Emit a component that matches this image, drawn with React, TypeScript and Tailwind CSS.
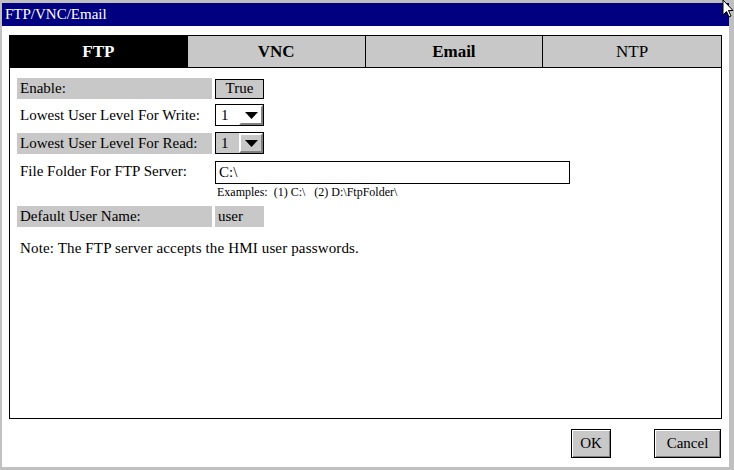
import React from 'react';

const serif = { fontFamily: '"Liberation Serif", "Times New Roman", serif' };

const tabs = [
  { name: 'FTP', active: true, bold: true },
  { name: 'VNC', active: false, bold: true },
  { name: 'Email', active: false, bold: true },
  { name: 'NTP', active: false, bold: false },
];

const Label = ({ text, shaded }: { text: string; shaded?: boolean }) => (
  <div className={`w-[195px] h-[21px] flex items-center pl-[3px] ${shaded ? 'bg-[#c8c8c8]' : ''}`}>
    {text}
  </div>
);

const Select = ({ value, shaded }: { value: string; shaded?: boolean }) => (
  <div className={`w-[49px] h-[22px] flex border border-black ${shaded ? 'bg-[#c8c8c8]' : 'bg-white'}`}>
    <div className="w-[23px] flex items-center pl-[5px]">{value}</div>
    <div className="flex-1 flex items-center justify-center border-t-2 border-l-2 border-t-white border-l-white border-b-2 border-r-2 border-b-[#808080] border-r-[#808080]">
      <svg width="13" height="7" viewBox="0 0 13 7">
        <path d="M0 0 H13 L6.5 7 Z" fill="black" />
      </svg>
    </div>
  </div>
);

export default function App() {
  return (
    <div
      className="relative w-[734px] h-[470px] bg-[#c0c0c0] pt-[3px] pl-[2px] pr-[5px] pb-[3px] flex flex-col text-[15px] text-black overflow-hidden"
      style={serif}
    >
      {/* title bar */}
      <div className="h-[23px] bg-[#000080] text-white flex items-center pl-[3px] text-[15px]">FTP/VNC/Email</div>

      {/* body */}
      <div className="flex-1 bg-white flex flex-col pt-[9px] px-[7px]">
        <div className="h-[384px] border border-black flex flex-col">
          <div className="h-[32px] grid grid-cols-4 border-b border-black">
            {tabs.map((t, i) => (
              <div
                key={t.name}
                className={`flex items-center justify-center text-[17px] ${t.bold ? 'font-bold' : ''} ${
                  t.active ? 'bg-black text-white' : 'bg-[#c8c8c8] text-black'
                } ${i < 3 ? 'border-r border-black' : ''}`}
              >
                {t.name}
              </div>
            ))}
          </div>

          <div className="flex flex-col pl-[7px] pt-[10px]">
            <div className="flex items-center gap-[3px]">
              <Label text="Enable:" shaded />
              <div className="w-[49px] h-[20px] bg-[#c8c8c8] border border-black flex items-center justify-center">True</div>
            </div>

            <div className="flex items-center gap-[3px] mt-[5px]">
              <Label text="Lowest User Level For Write:" />
              <Select value="1" />
            </div>

            <div className="flex items-center gap-[3px] mt-[6px]">
              <Label text="Lowest User Level For Read:" shaded />
              <Select value="1" shaded />
            </div>

            <div className="flex items-start gap-[3px] mt-[7px]">
              <Label text="File Folder For FTP Server:" />
              <div className="flex flex-col">
                <div className="w-[355px] h-[23px] border border-black flex items-center pl-[3px]">C:\</div>
                <div className="text-[12px] pl-[2px] mt-[2px] leading-[13px]">Examples:&nbsp; (1) C:\&nbsp;&nbsp; (2) D:\FtpFolder\</div>
              </div>
            </div>

            <div className="flex items-center gap-[3px] mt-[7px]">
              <Label text="Default User Name:" shaded />
              <div className="w-[49px] h-[21px] bg-[#c8c8c8] flex items-center pl-[3px]">user</div>
            </div>

            <div className="mt-[10px] pl-[3px] tracking-[0.15px]">Note: The FTP server accepts the HMI user passwords.</div>
          </div>
        </div>

        <div className="flex justify-end gap-[43px] mt-[10px] pr-[1px]">
          <button className="w-[40px] h-[29px] bg-[#c8c8c8] border border-black shadow-[inset_1px_1px_0_#ffffff,inset_-1px_-1px_0_#808080]">OK</button>
          <button className="w-[67px] h-[29px] bg-[#c8c8c8] border border-black shadow-[inset_1px_1px_0_#ffffff,inset_-1px_-1px_0_#808080]">Cancel</button>
        </div>
      </div>

      {/* mouse cursor */}
      <svg className="absolute left-[722px] top-0" width="14" height="20" viewBox="0 0 14 20">
        <path d="M1 0 L1 15 L4.5 11.5 L7 17 L9 16 L6.5 10.5 L11 10.5 Z" fill="white" stroke="black" strokeWidth="1" />
      </svg>
    </div>
  );
}
